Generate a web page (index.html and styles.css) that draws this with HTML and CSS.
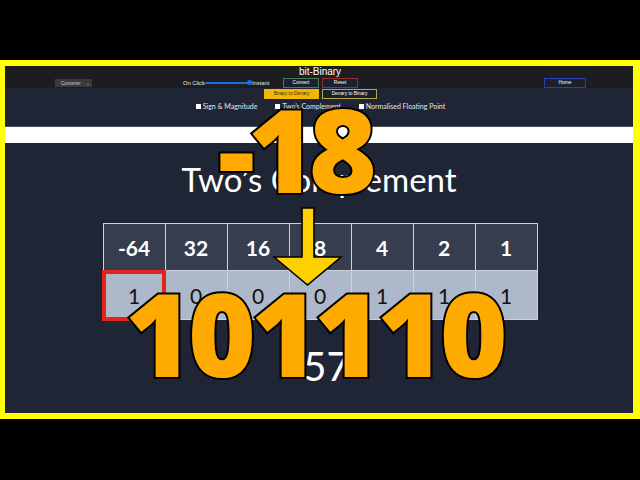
FILE: index.html
```html
<!DOCTYPE html>
<html>
<head>
<meta charset="utf-8">
<title>bit-Binary</title>
<link rel="stylesheet" href="styles.css">
</head>
<body>
<div class="frame">
  <header class="topbar">
    <div class="title">bit-Binary</div>
    <div class="controls">
      <div class="select">Converter <span class="caret">&#8964;</span></div>
      <div class="speed">
        <span class="lbl lbl-left">On Click</span>
        <span class="slider"><span class="thumb"></span></span>
        <span class="lbl lbl-right">Instant</span>
      </div>
      <button class="btn btn-convert">Convert</button>
      <button class="btn btn-reset">Reset</button>
      <button class="btn btn-home">Home</button>
    </div>
  </header>

  <div class="modes">
    <button class="mode mode-active">Binary to Denary</button>
    <button class="mode">Denary to Binary</button>
  </div>

  <div class="options">
    <label class="opt"><span class="box"></span>Sign &amp; Magnitude</label>
    <label class="opt"><span class="box"></span>Two’s Complement</label>
    <label class="opt"><span class="box"></span>Normalised Floating Point</label>
  </div>

  <div class="divider"></div>

  <h1 class="heading">Two’s Complement</h1>

  <table class="bits">
    <tr class="place">
      <th>-64</th><th>32</th><th>16</th><th>8</th><th>4</th><th>2</th><th>1</th>
    </tr>
    <tr class="value">
      <td class="hl">1</td><td>0</td><td>0</td><td>0</td><td>1</td><td>1</td><td>1</td>
    </tr>
  </table>

  <div class="result">-57</div>

  <div class="big big-top">-18</div>
  <svg class="arrow" width="72" height="82" viewBox="0 0 72 82">
    <polygon points="30,2 42,2 42,51 69,51 35.5,79 2,51 30,51" fill="#ffd000" stroke="#000" stroke-width="1.6" stroke-linejoin="miter"/>
  </svg>
  <div class="big big-bottom">101110</div>
</div>
</body>
</html>
```

FILE: styles.css
```css
html, body {
  margin: 0;
  padding: 0;
}

body {
  width: 640px;
  height: 480px;
  overflow: hidden;
  background: #000;
  padding-top: 60px;
  box-sizing: border-box;
  font-family: "Lato", "Liberation Sans", sans-serif;
}

.frame {
  position: relative;
  height: 347px;
  border-style: solid;
  border-color: #ffff00;
  border-width: 6px 7px 6px 5px;
  background: #202536;
  overflow: hidden;
  display: flex;
  flex-direction: column;
}

/* ---------- top bar ---------- */
.topbar {
  height: 22px;
  background: #1c1d21;
  display: flex;
  flex-direction: column;
}

.title {
  height: 11px;
  line-height: 11px;
  font-family: "Liberation Sans", sans-serif;
  font-size: 10px;
  color: #fff;
  text-align: center;
  padding-left: 2px;
}

.controls {
  height: 11px;
  display: flex;
  align-items: center;
}

.select {
  margin-left: 50px;
  width: 37px;
  height: 8px;
  background: #3b3b3d;
  color: #c8c8c8;
  font-family: "Liberation Sans", sans-serif;
  font-size: 4.5px;
  line-height: 8px;
  box-sizing: border-box;
  padding-left: 6px;
}

.caret {
  margin-left: 4px;
  font-size: 5px;
}

.speed {
  margin-left: 91px;
  width: 89px;
  display: flex;
  align-items: center;
}

.lbl {
  font-family: "Liberation Sans", sans-serif;
  font-size: 5.8px;
  color: #e8e8e8;
  white-space: nowrap;
}

.lbl-left { width: 22px; }
.lbl-right { width: 20px; margin-left: 2px; }

.slider {
  position: relative;
  width: 45px;
  height: 2px;
  background: #1a6fdc;
  border-radius: 1px;
}

.thumb {
  position: absolute;
  right: -2px;
  top: -2px;
  width: 5px;
  height: 5px;
  border-radius: 50%;
  background: #1a6fdc;
}

.btn {
  height: 10px;
  padding: 0;
  box-sizing: border-box;
  background: #1b1f2e;
  color: #fff;
  font-family: "Liberation Sans", sans-serif;
  font-size: 4.8px;
  line-height: 8px;
  border: 1px solid;
  text-align: center;
}

.btn-convert { margin-left: 11px; width: 36px; border-color: #3f7d57; }
.btn-reset { margin-left: 3px; width: 36px; border-color: #9b2c2e; }
.btn-home { margin-left: 186px; width: 42px; border-color: #2b3cb4; }

/* ---------- mode buttons ---------- */
.modes {
  margin-top: 1px;
  height: 10px;
  display: flex;
  justify-content: center;
  gap: 3px;
  padding-left: 3px;
}

.mode {
  width: 55px;
  height: 10px;
  padding: 0;
  box-sizing: border-box;
  border: 1px solid #b5a642;
  background: #1b1f2e;
  color: #fff;
  font-family: "Liberation Sans", sans-serif;
  font-size: 4.8px;
  line-height: 8px;
  text-align: center;
}

.mode-active {
  background: #f2b705;
  border-color: #f2b705;
  color: #3a3000;
}

/* ---------- options ---------- */
.options {
  margin-top: 3px;
  height: 8px;
  display: flex;
  justify-content: center;
  gap: 18px;
  padding-left: 3px;
}

.opt {
  display: flex;
  align-items: center;
  font-size: 7px;
  line-height: 8px;
  color: #e6e6e6;
  white-space: nowrap;
}

.box {
  width: 5px;
  height: 5px;
  background: #fff;
  margin-right: 2px;
}

/* ---------- divider ---------- */
.divider {
  margin-top: 16px;
  height: 16px;
  border-top: 1px solid #4a4e5a;
  background: #fff;
}

/* ---------- heading ---------- */
.heading {
  margin: 16px 0 0 0;
  height: 40px;
  line-height: 40px;
  font-size: 33px;
  font-weight: 400;
  color: #fff;
  text-align: center;
}

/* ---------- table ---------- */
.bits {
  margin: 24px auto 0 auto;
  border-collapse: collapse;
  table-layout: fixed;
  position: relative;
  left: 1px;
}

.bits th, .bits td {
  width: 61px;
  padding: 0;
  border: 1px solid #cdd2da;
  text-align: center;
  font-size: 21px;
}

.bits th {
  height: 46px;
  background: #353d4f;
  color: #fff;
  font-weight: 700;
}

.bits td {
  height: 48px;
  background: #adb9ca;
  color: #111;
  font-weight: 400;
}

.bits td.hl {
  outline: 4px solid #e1251b;
  outline-offset: -3px;
}

/* ---------- result ---------- */
.result {
  margin-top: 22px;
  height: 48px;
  line-height: 48px;
  font-size: 40px;
  color: #fff;
  text-align: center;
}

/* ---------- overlays ---------- */
.big {
  position: absolute;
  font-family: "Open Sans", "Roboto", sans-serif;
  font-weight: 800;
  font-size: 116px;
  line-height: 1;
  color: #ffaa00;
  -webkit-text-stroke: 4px #000;
  paint-order: stroke fill;
  white-space: nowrap;
}

.big-top {
  top: 24px;
  left: 213px;
  letter-spacing: -7px;
}

.big-bottom {
  top: 208px;
  left: 120px;
  letter-spacing: -5px;
}

.arrow {
  position: absolute;
  left: 267px;
  top: 140px;
}
```
